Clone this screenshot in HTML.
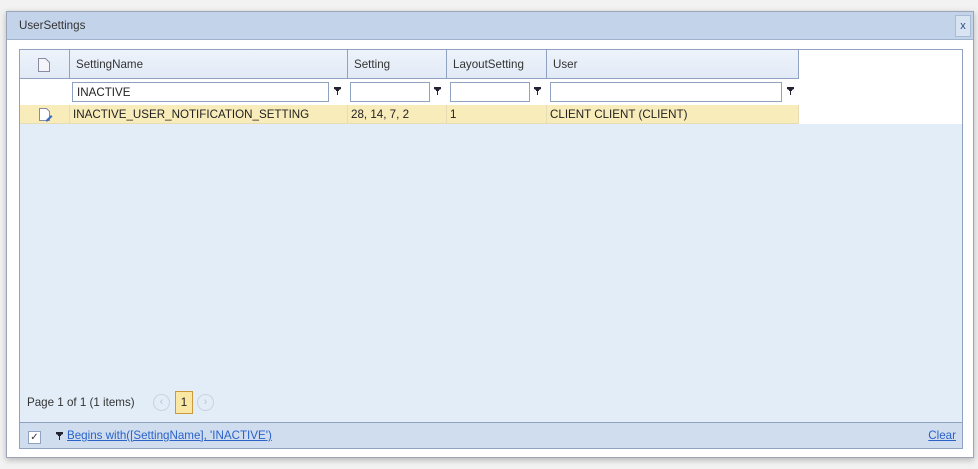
<!DOCTYPE html>
<html><head><style>
*{margin:0;padding:0;box-sizing:border-box}
body{width:978px;height:469px;background:#f2f2f2;font-family:"Liberation Sans",sans-serif;font-size:11.6px;color:#222;position:relative;overflow:hidden}
.dlg{position:absolute;left:6px;top:11px;width:968px;height:447px;background:#fff;border:1px solid #9aa6b8;box-shadow:0 2px 6px rgba(0,0,0,.25)}
.title{position:absolute;left:0;top:0;width:100%;height:28px;background:#c3d4ea;border-bottom:1px solid #9fb3cf;padding:7px 0 0 12px;color:#333}
.x{position:absolute;right:2px;top:3px;width:16px;height:22px;border:1px solid #a9bbd3;background:#d9e4f3;color:#2b4a80;font-size:11px;text-align:center;line-height:20px}
.grid{position:absolute;left:12px;top:37px;width:944px;height:400px;border:1px solid #8fa3c0;background:#e3edf8;overflow:hidden}
.top{position:absolute;left:0;top:0;width:100%;height:74px;background:#fff}
.c{position:absolute;border-right:1px solid #8fa3c0}
.hd{top:0;height:29px;background:linear-gradient(#eef3fb,#e1eaf6);border-bottom:1px solid #8fa3c0;padding:8px 0 0 6px;color:#333}
.inp{position:absolute;top:32px;height:20px;border:1px solid #8fa3c0;background:#fff;padding:3px 0 0 4px}
.fl{position:absolute;top:37px}
.dr{top:55px;height:19px;background:#f9ecbb;border-bottom:1px solid #e6dcb5;border-right:1px solid #e6dcb5;padding:3px 0 0 3px}
.pager{position:absolute;left:7px;top:346px;color:#333}
.nav{position:absolute;top:344px;width:17px;height:17px;border:1px solid #c9d3e0;border-radius:50%;color:#b8c3d2;font-size:11px;text-align:center;line-height:14px}
.pg{position:absolute;left:155px;top:341px;width:18px;height:23px;background:#f9e7a3;border:1px solid #c99a3c;text-align:center;line-height:21px}
.fb{position:absolute;left:0;top:372px;width:100%;height:28px;background:#d0ddef;border-top:1px solid #8fa3c0}
a{color:#2a62c8;text-decoration:underline}
.cb{position:absolute;left:8px;top:8px;width:13px;height:13px;border:1px solid #8fa3c0;background:#fff;font-size:10px;line-height:11px;text-align:center;color:#334}
</style></head><body>
<div class="dlg">
<div class="title">UserSettings<div class="x">x</div></div>
<div class="grid">
<div class="top">
<div class="c hd" style="left:0;width:50px;padding:0">
<svg style="position:absolute;left:18px;top:8px" width="12" height="14"><path d="M.5 .5h7l4 4v9h-11z" fill="#f4f4fb" stroke="#8a8aa0"/></svg></div>
<div class="c hd" style="left:50px;width:278px">SettingName</div>
<div class="c hd" style="left:328px;width:99px">Setting</div>
<div class="c hd" style="left:427px;width:100px">LayoutSetting</div>
<div class="c hd" style="left:527px;width:252px">User</div>
<div class="inp" style="left:52px;width:257px">INACTIVE</div>
<div class="inp" style="left:330px;width:80px"></div>
<div class="inp" style="left:430px;width:80px"></div>
<div class="inp" style="left:530px;width:232px"></div>
<svg class="fl" style="left:314px" width="7" height="8"><path d="M0 0h7v2l-2 1v1h-1v4h-1v-4h-1v-1l-2-1z" fill="#223"/></svg>
<svg class="fl" style="left:414px" width="7" height="8"><path d="M0 0h7v2l-2 1v1h-1v4h-1v-4h-1v-1l-2-1z" fill="#223"/></svg>
<svg class="fl" style="left:514px" width="7" height="8"><path d="M0 0h7v2l-2 1v1h-1v4h-1v-4h-1v-1l-2-1z" fill="#223"/></svg>
<svg class="fl" style="left:767px" width="7" height="8"><path d="M0 0h7v2l-2 1v1h-1v4h-1v-4h-1v-1l-2-1z" fill="#223"/></svg>
<div class="c dr" style="left:0;width:50px"><svg style="position:absolute;left:19px;top:3px" width="14" height="14"><path d="M.5 .5h7l3 3v9h-10z" fill="#fff" stroke="#8a8aa0"/><path d="M7 12l5-5 1.5 1.5-5 5H7z" fill="#3a6fc0"/></svg></div>
<div class="c dr" style="left:50px;width:278px">INACTIVE_USER_NOTIFICATION_SETTING</div>
<div class="c dr" style="left:328px;width:99px">28, 14, 7, 2</div>
<div class="c dr" style="left:427px;width:100px">1</div>
<div class="c dr" style="left:527px;width:252px">CLIENT CLIENT (CLIENT)</div>
</div>
<div class="pager">Page 1 of 1 (1 items)</div>
<div class="nav" style="left:133px">&lsaquo;</div>
<div class="pg">1</div>
<div class="nav" style="left:177px">&rsaquo;</div>
<div class="fb"><div class="cb">&#10003;</div>
<svg style="position:absolute;left:36px;top:9px" width="7" height="8"><path d="M0 0h7v2l-2 1v1h-1v4h-1v-4h-1v-1l-2-1z" fill="#223"/></svg>
<a style="position:absolute;left:47px;top:6px">Begins with([SettingName], 'INACTIVE')</a>
<a style="position:absolute;right:6px;top:6px">Clear</a></div>
</div>
</div>
</body></html>
